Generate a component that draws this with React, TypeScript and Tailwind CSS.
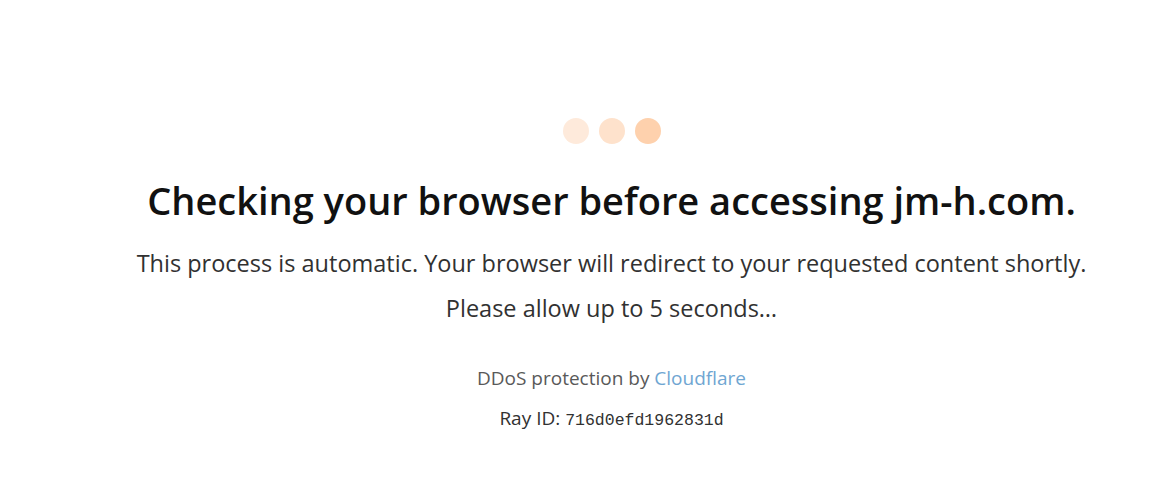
import React from "react";

export default function App() {
  return (
    <div
      className="w-[1175px] h-[500px] bg-white flex flex-col items-center pl-[48px]"
      style={{ fontFamily: '"Open Sans", "Noto Sans", sans-serif' }}
    >
      <div className="flex gap-[10px] mt-[118px]">
        <div className="w-[26px] h-[26px] rounded-full bg-[#feeadb]" />
        <div className="w-[26px] h-[26px] rounded-full bg-[#fee2cc]" />
        <div className="w-[26px] h-[26px] rounded-full bg-[#fed1ad]" />
      </div>
      <h1 className="mt-[34px] text-[38px] leading-[44px] font-semibold text-[#111111] whitespace-nowrap">
        Checking your browser before accessing jm-h.com.
      </h1>
      <p className="mt-[25px] text-[23.5px] leading-[32px] text-[#313131] whitespace-nowrap">
        This process is automatic. Your browser will redirect to your requested content shortly.
      </p>
      <p className="mt-[13px] text-[23.5px] leading-[32px] text-[#313131] whitespace-nowrap">
        Please allow up to 5 seconds…
      </p>
      <p className="mt-[42px] text-[19px] leading-[24px] text-[#595959] whitespace-nowrap">
        DDoS protection by <span className="text-[#6fa6d2]">Cloudflare</span>
      </p>
      <p className="mt-[16px] text-[19px] leading-[24px] text-[#313131] whitespace-nowrap">
        Ray ID:{" "}
        <span
          style={{ fontFamily: '"Liberation Mono", monospace' }}
          className="text-[16.5px]"
        >
          716d0efd1962831d
        </span>
      </p>
    </div>
  );
}
